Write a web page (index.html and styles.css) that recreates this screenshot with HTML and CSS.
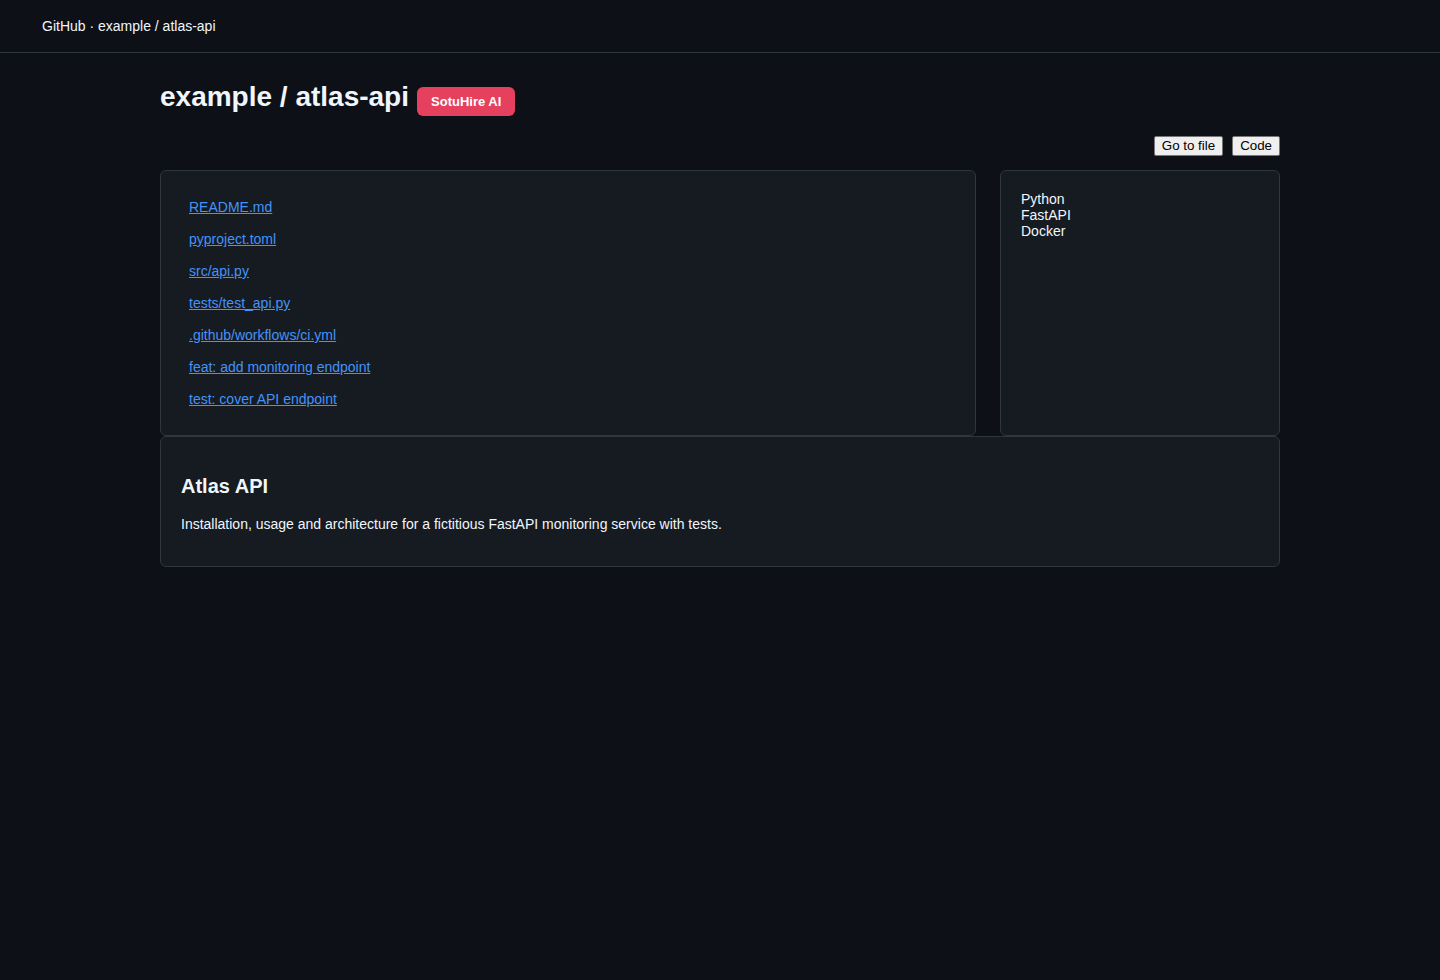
FILE: index.html
```html
<!DOCTYPE html>
<html lang="en">
<head>
  <meta charset="UTF-8" />
  <meta name="viewport" content="width=device-width, initial-scale=1" />
  <title>example / atlas-api</title>
  <link rel="stylesheet" href="styles.css">
</head>
<body>
  <header class="top-bar">
    GitHub · example / atlas-api
  </header>

  <main class="container">
    <div class="title-row">
      <h1>example / atlas-api</h1>
      <span class="badge">SotuHire AI</span>
    </div>

    <div class="actions">
      <button>Go to file</button>
      <button>Code</button>
    </div>

    <div class="repo-grid">
      <div class="card files">
        <ul>
          <li><a href="#">README.md</a></li>
          <li><a href="#">pyproject.toml</a></li>
          <li><a href="#">src/api.py</a></li>
          <li><a href="#">tests/test_api.py</a></li>
          <li><a href="#">.github/workflows/ci.yml</a></li>
          <li><a href="#">feat: add monitoring endpoint</a></li>
          <li><a href="#">test: cover API endpoint</a></li>
        </ul>
      </div>
      <div class="card sidebar">
        <div>Python</div>
        <div>FastAPI</div>
        <div>Docker</div>
      </div>
    </div>

    <div class="card readme">
      <h2>Atlas API</h2>
      <p>Installation, usage and architecture for a fictitious FastAPI monitoring service with tests.</p>
    </div>
  </main>
</body>
</html>
```

FILE: styles.css
```css
* {
  box-sizing: border-box;
}

body {
  margin: 0;
  background-color: #0d1117;
  color: #f0f6fc;
  font-family: "Liberation Sans", Arial, sans-serif;
  font-size: 14px;
  line-height: 16px;
}

.top-bar {
  padding: 18px 42px 18px;
  border-bottom: 1px solid #30363d;
}

.container {
  width: 1120px;
  margin: 0 auto;
  padding-top: 28px;
}

.title-row {
  display: flex;
  align-items: baseline;
  gap: 8px;
}

.title-row h1 {
  margin: 0;
  font-size: 28px;
  line-height: 32px;
  font-weight: bold;
}

.badge {
  background-color: #e5405e;
  color: #fff;
  font-size: 13px;
  font-weight: bold;
  line-height: 15px;
  padding: 7px 14px;
  border-radius: 6px;
}

.actions {
  display: flex;
  justify-content: flex-end;
  gap: 9px;
  margin: 20px 0 14px;
}

.actions button {
  font-family: "Liberation Sans", Arial, sans-serif;
  font-size: 13.333px;
  line-height: 16px;
  height: 20px;
  padding: 1px 7px;
  background-color: #efefef;
  color: #000;
  border: 1px solid #767676;
  border-radius: 2px;
}

.repo-grid {
  display: grid;
  grid-template-columns: 1fr 280px;
  gap: 24px;
}

.card {
  background-color: #161b22;
  border: 1px solid #30363d;
  border-radius: 6px;
}

.files ul {
  list-style: none;
  margin: 0;
  padding: 20px 28px;
}

.files li {
  padding: 8px 0;
}

.files a {
  color: #4493f8;
}

.sidebar {
  padding: 20px;
}

.readme {
  padding: 0 20px;
}

.readme h2 {
  margin: 38px 0 18px;
  font-size: 20px;
  line-height: 23px;
}

.readme p {
  margin: 0 0 34px;
}
```
